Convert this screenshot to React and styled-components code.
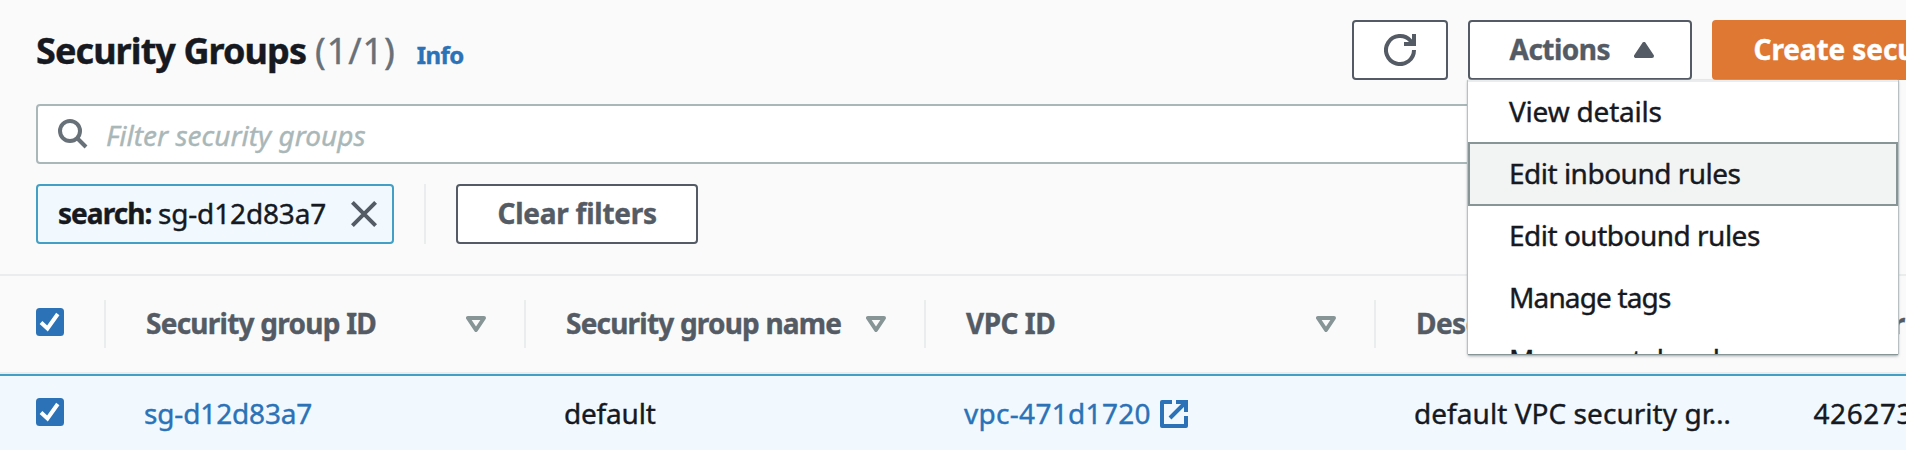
import React from 'react';
import styled, { createGlobalStyle } from 'styled-components';

const color = {
  page: '#fafafa',
  ink: '#16191f',
  slate: '#545b64',
  muted: '#687078',
  link: '#2b72b7',
  accent: '#439fc3',
  selected: '#f1f9ff',
  line: '#eaeded',
  input: '#aab7b8',
  icon: '#879596',
  primary: '#de7833',
};

const GlobalStyle = createGlobalStyle`
  * { box-sizing: border-box; }
  html, body { margin: 0; height: 450px; overflow: hidden; background: ${color.page}; }
  body { font: 400 28px/40px "Noto Sans", "Open Sans", sans-serif; color: ${color.ink}; -webkit-text-stroke: 0.4px currentColor; }
  svg { display: block; flex: none; }
`;

const Page = styled.main`
  width: 1906px;
  height: 450px;
  overflow: hidden;
  display: flex;
  flex-direction: column;
`;

const Label = styled.span`
  letter-spacing: ${(p) => p.$track || 0}px;
  font-weight: ${(p) => (p.$bold ? 700 : 'inherit')};
  white-space: nowrap;
`;

const Toolbar = styled.header`
  display: flex;
  justify-content: space-between;
  height: 80px;
  padding: 20px 0 0 36px;
  flex: none;
`;

const TitleBlock = styled.div`
  display: flex;
  align-items: baseline;
  padding-top: 1px;
  line-height: 60px;
`;

const Title = styled.h1`
  margin: 0;
  font-size: 36px;
  font-weight: 700;
  letter-spacing: -0.92px;
`;

const Count = styled.span`
  margin-left: 9px;
  font-size: 36px;
  letter-spacing: 0.9px;
  color: ${color.muted};
`;

const InfoLink = styled.a`
  margin-left: 21px;
  font-size: 24px;
  font-weight: 700;
  letter-spacing: -0.6px;
  color: ${color.link};
`;

const Actions = styled.div`
  display: flex;
  gap: 20px;
  width: 554px;
`;

const Button = styled.button`
  display: flex;
  align-items: center;
  flex: none;
  width: ${(p) => p.$width}px;
  height: 60px;
  padding: 0 0 ${(p) => (p.$iconOnly ? 0 : 2)}px ${(p) => (p.$iconOnly ? 30 : 39.5)}px;
  border: 2px solid ${(p) => (p.$primary ? color.primary : color.slate)};
  border-radius: 4px;
  background: ${(p) => (p.$primary ? color.primary : '#fff')};
  color: ${(p) => (p.$primary ? '#fff' : color.slate)};
  font: inherit;
  font-weight: 700;
`;

const MenuAnchor = styled.div`
  position: relative;
  flex: none;
`;

const Caret = styled.svg`
  margin: 2px 0 0 24px;
`;

const Menu = styled.div`
  position: absolute;
  z-index: 5;
  top: 60px;
  left: 0;
  width: 430px;
  height: 274px;
  overflow: hidden;
  border-top: 2px solid ${color.line};
  background: #fff;
  box-shadow: 0 1px 1px ${color.icon}, 1px 0 1px #c3c9ca, -1px 0 1px #c3c9ca, 0 2px 3px rgba(0, 28, 36, 0.35);
`;

const MenuList = styled.ul`
  list-style: none;
  margin: -2px 0 0;
  padding: 0;
`;

const MenuItem = styled.li`
  position: relative;
  height: ${(p) => (p.$active ? 64 : 62)}px;
  margin-bottom: ${(p) => (p.$active ? -2 : 0)}px;
  padding-left: 41px;
  line-height: 62px;
  background: ${(p) => (p.$active ? '#f2f3f3' : 'transparent')};
  box-shadow: ${(p) => (p.$active ? `inset 0 0 0 2px ${color.icon}` : 'none')};
`;

const SearchField = styled.div`
  display: flex;
  align-items: center;
  gap: 18px;
  flex: none;
  height: 60px;
  margin: 24px 36px 0;
  padding-left: 20px;
  border: 2px solid ${color.input};
  border-radius: 4px;
  background: #fff;
`;

const Placeholder = styled.span`
  padding-top: 2px;
  font-style: italic;
  color: ${color.input};
`;

const Filters = styled.div`
  display: flex;
  flex: none;
  height: 60px;
  margin: 20px 0 30px 36px;
`;

const Token = styled.div`
  display: flex;
  align-items: center;
  width: 358px;
  padding: 0 15px 2px 20px;
  border: 2px solid ${color.accent};
  border-radius: 4px;
  background: ${color.selected};
`;

const TokenValue = styled(Label)`
  margin-left: 6.5px;
`;

const Dismiss = styled.svg`
  margin: 1px 0 0 auto;
`;

const Separator = styled.div`
  width: 2px;
  margin: 0 30px;
  background: ${color.line};
`;

const Table = styled.section`
  display: flex;
  flex-direction: column;
  flex: 1;
  border-top: 2px solid ${color.line};
`;

const GridRow = styled.div`
  display: grid;
  grid-template-columns: 106px 420px 400px 450px 398px 132px;
  align-items: center;
`;

const HeadRow = styled(GridRow)`
  height: 98px;
  border-bottom: 2px solid ${color.line};
  color: ${color.slate};
  font-weight: 700;
`;

const BodyRow = styled(GridRow)`
  height: 76px;
  border-top: 2px solid ${color.accent};
  background: ${color.selected};
`;

const HeadCell = styled.div`
  display: flex;
  align-items: center;
  justify-content: space-between;
  height: 48px;
  padding: 0 ${(p) => (p.$last ? 0 : 38)}px ${(p) => (p.$check ? 4 : 2)}px ${(p) => (p.$check ? 36 : 40)}px;
  border-right: ${(p) => (p.$last ? 0 : 2)}px solid ${color.line};
`;

const Cell = styled.div`
  display: flex;
  align-items: center;
  padding-left: ${(p) => (p.$check ? 36 : p.$last ? 39.5 : 38)}px;
  padding-bottom: ${(p) => (p.$check ? 2 : 0)}px;
  color: ${(p) => (p.$link ? color.link : 'inherit')};
`;

const SortMark = styled.svg`
  margin-top: 2px;
`;

const ExternalMark = styled.svg`
  margin: 2px 0 0 9px;
`;

const Checkbox = () => (
  <svg width="28" height="28" viewBox="0 0 28 28">
    <rect width="28" height="28" rx="3.5" fill={color.link} />
    <path d="M5 14.5 L11.5 20.5 L21.8 6" fill="none" stroke="#fff" strokeWidth="4" />
  </svg>
);

const SortIcon = () => (
  <SortMark width="20" height="16" viewBox="0 0 20 16">
    <path d="M2 2H18L10 14Z" fill="none" stroke={color.icon} strokeWidth="4" strokeLinejoin="round" />
  </SortMark>
);

const menuItems = [
  ['View details', -0.2],
  ['Edit inbound rules', -0.5],
  ['Edit outbound rules', -0.5],
  ['Manage tags', -0.85],
  ['Manage stale rules', -0.6],
];

const columns = [
  ['Security group ID', -0.75],
  ['Security group name', -0.8],
  ['VPC ID', -0.5],
  ['Description', -0.6],
];

export default function App() {
  return (
    <Page>
      <GlobalStyle />
      <Toolbar>
        <TitleBlock>
          <Title>Security Groups</Title>
          <Count>(1/1)</Count>
          <InfoLink>Info</InfoLink>
        </TitleBlock>
        <Actions>
          <Button $width={96} $iconOnly aria-label="Refresh">
            <svg width="32" height="32" viewBox="0 0 32 32" fill="none" stroke={color.slate} strokeWidth="4">
              <path d="M30 16A14 14 0 1 1 26.5 6.8L29 10" />
              <path d="M30 0V10H20" />
            </svg>
          </Button>
          <MenuAnchor>
            <Button $width={224}>
              <Label $track={-0.5}>Actions</Label>
              <Caret width="20" height="16" viewBox="0 0 20 16">
                <path d="M2 14H18L10 2Z" fill={color.slate} stroke={color.slate} strokeWidth="4" strokeLinejoin="round" />
              </Caret>
            </Button>
            <Menu>
              <MenuList>
                {menuItems.map(([text, track], i) => (
                  <MenuItem key={text} $active={i === 1}>
                    <Label $track={track}>{text}</Label>
                  </MenuItem>
                ))}
              </MenuList>
            </Menu>
          </MenuAnchor>
          <Button $width={380} $primary>
            <Label $track={-0.1}>Create security group</Label>
          </Button>
        </Actions>
      </Toolbar>

      <SearchField>
        <svg width="30" height="30" viewBox="0 0 30 30" fill="none" stroke={color.muted} strokeWidth="4">
          <circle cx="12" cy="12" r="10" />
          <path d="M19 19L28 28" />
        </svg>
        <Placeholder>Filter security groups</Placeholder>
      </SearchField>

      <Filters>
        <Token>
          <Label $bold $track={-0.95}>search:</Label>
          <TokenValue $track={-0.15}>sg-d12d83a7</TokenValue>
          <Dismiss width="26" height="26" viewBox="0 0 26 26">
            <path d="M1.4 1.4L24.6 24.6M24.6 1.4L1.4 24.6" stroke={color.slate} strokeWidth="4" />
          </Dismiss>
        </Token>
        <Separator />
        <Button $width={242}>
          <Label $track={-0.25}>Clear filters</Label>
        </Button>
      </Filters>

      <Table>
        <HeadRow>
          <HeadCell $check>
            <Checkbox />
          </HeadCell>
          {columns.map(([text, track]) => (
            <HeadCell key={text}>
              <Label $track={track}>{text}</Label>
              <SortIcon />
            </HeadCell>
          ))}
          <HeadCell $last>
            <Label $track={-0.6}>Owner</Label>
          </HeadCell>
        </HeadRow>
        <BodyRow>
          <Cell $check>
            <Checkbox />
          </Cell>
          <Cell $link>
            <Label $track={-0.15}>sg-d12d83a7</Label>
          </Cell>
          <Cell>
            <Label $track={-0.2}>default</Label>
          </Cell>
          <Cell $link>
            <Label $track={0.3}>vpc-471d1720</Label>
            <ExternalMark width="28" height="28" viewBox="0 0 28 28" fill="none" stroke={color.link} strokeWidth="4">
              <path d="M12 2H2V26H26V16" strokeLinejoin="round" />
              <path d="M16 2H26V12M26 2L10 18" />
            </ExternalMark>
          </Cell>
          <Cell>
            <Label $track={0.05}>default VPC security gr…</Label>
          </Cell>
          <Cell $last>
            <Label $track={0.6}>426273</Label>
          </Cell>
        </BodyRow>
      </Table>
    </Page>
  );
}
